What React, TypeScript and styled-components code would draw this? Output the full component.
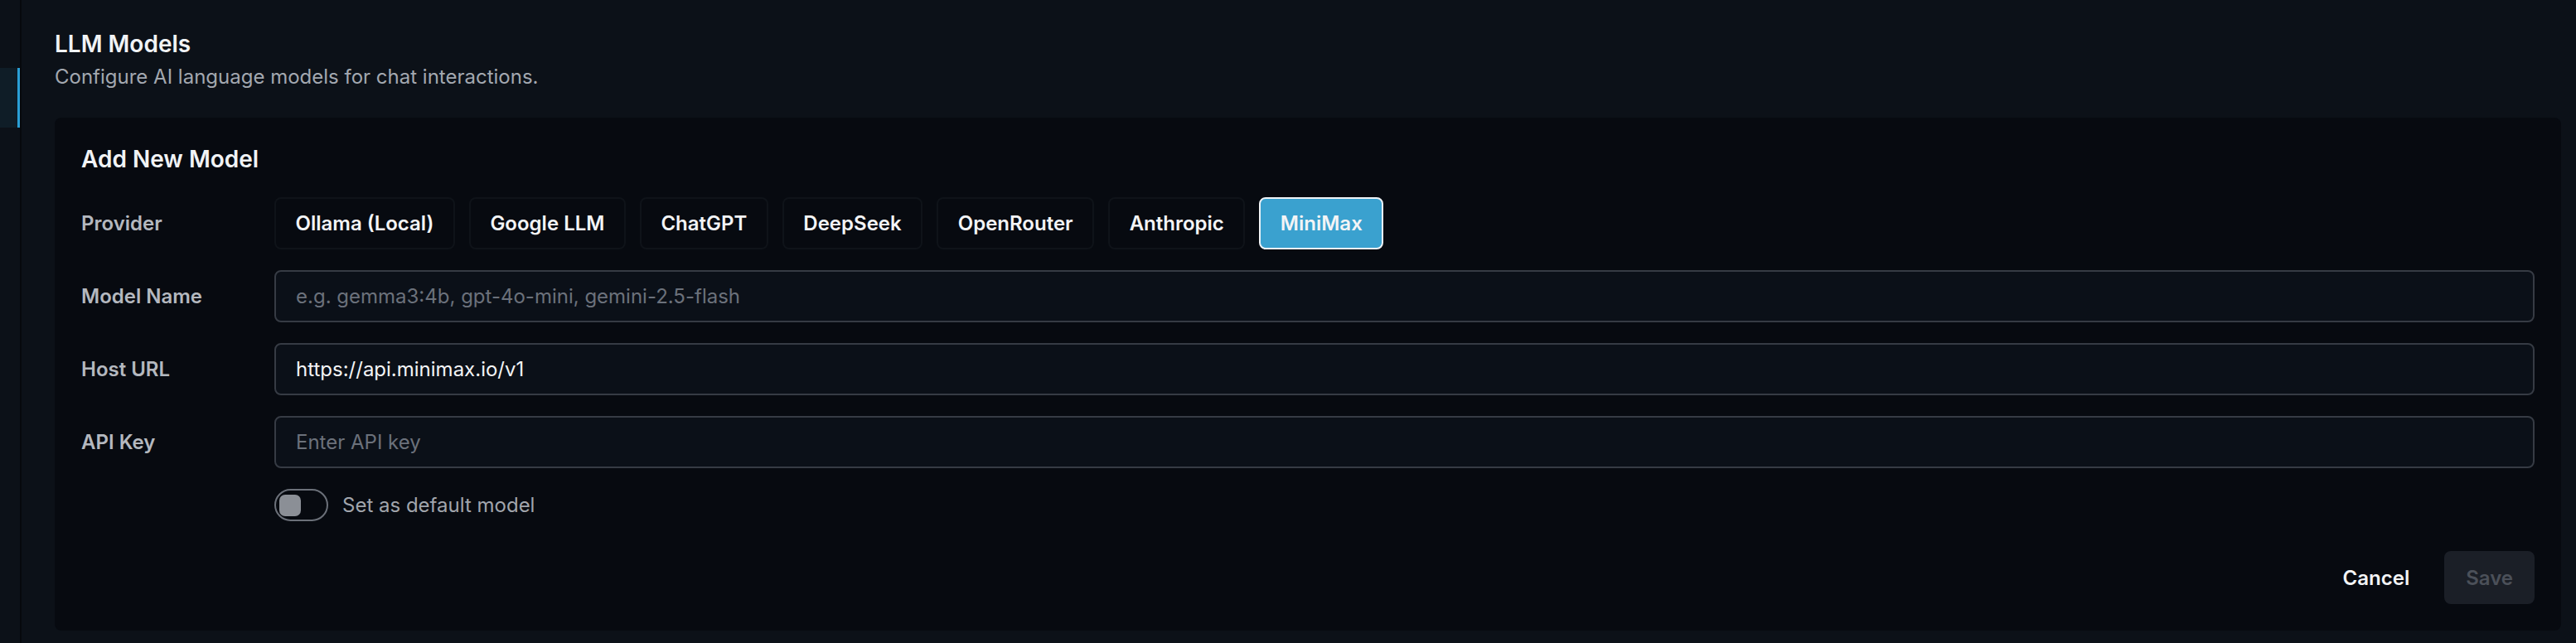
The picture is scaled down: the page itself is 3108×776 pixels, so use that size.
import React from "react";
import styled, { createGlobalStyle } from "styled-components";

const GlobalStyle = createGlobalStyle`
  * { box-sizing: border-box; }
  html, body { margin: 0; padding: 0; background: #0c1118; }
  body { font-family: Inter, "Noto Sans", "Liberation Sans", sans-serif; -webkit-font-smoothing: antialiased; }
  #root { min-height: 100vh; }
`;

const Shell = styled.div`
  display: flex;
  min-height: 776px;
  background: #0c1118;
`;

const Sidebar = styled.aside`
  width: 26px;
  flex: 0 0 26px;
  border-right: 2px solid #06090d;
  padding-top: 82px;
`;

const NavItem = styled.div<{ $active?: boolean }>`
  height: 72px;
  background: ${(p) => (p.$active ? "#0f1d27" : "transparent")};
  border-right: 3px solid ${(p) => (p.$active ? "#2a9fd6" : "transparent")};
`;

const Main = styled.main`
  flex: 1;
  min-width: 0;
  padding: 35px 18px 15px 40px;
`;

const PageTitle = styled.h1`
  margin: 0;
  font-size: 28px;
  line-height: 36px;
  font-weight: 600;
  color: #f1f3f5;
`;

const PageSubtitle = styled.p`
  margin: 6px 0 0;
  font-size: 24px;
  line-height: 32px;
  font-weight: 400;
  color: #a3a8b0;
`;

const Card = styled.section`
  margin-top: 33px;
  background: #070a10;
  border-radius: 8px;
  padding: 32px;
`;

const CardTitle = styled.h2`
  margin: 0 0 28px;
  font-size: 28px;
  line-height: 36px;
  font-weight: 600;
  color: #f1f3f5;
`;

const FormGrid = styled.div`
  display: grid;
  grid-template-columns: 233px 1fr;
  row-gap: 25px;
  align-items: center;
`;

const Label = styled.label`
  font-size: 24px;
  line-height: 32px;
  font-weight: 600;
  color: #b4b8bf;
`;

const ProviderRow = styled.div`
  display: flex;
  gap: 17px;
`;

const ProviderButton = styled.button<{ $active?: boolean }>`
  height: 63px;
  padding: 0 23.5px;
  border-radius: 8px;
  border: 2px solid ${(p) => (p.$active ? "#eef3f7" : "#0f1319")};
  background: ${(p) => (p.$active ? "#3aa1cf" : "transparent")};
  color: #f3f4f6;
  font-family: inherit;
  font-size: 24px;
  font-weight: 600;
  cursor: pointer;
`;

const Input = styled.input`
  width: 100%;
  height: 63px;
  padding: 0 24px;
  border: 2px solid #363b44;
  border-radius: 8px;
  background: #0b1018;
  color: #f3f4f6;
  font-family: inherit;
  font-size: 24px;
  outline: none;
  &::placeholder { color: #6b717b; }
`;

const ToggleRow = styled.div`
  grid-column: 2;
  display: flex;
  align-items: center;
  gap: 17px;
`;

const Switch = styled.button`
  width: 65px;
  height: 39px;
  padding: 0 4px;
  border: 2px solid #6b7079;
  border-radius: 999px;
  background: transparent;
  display: flex;
  align-items: center;
  cursor: pointer;
`;

const Knob = styled.span`
  width: 26px;
  height: 26px;
  border-radius: 7px;
  background: #8b8f96;
`;

const ToggleText = styled.span`
  font-size: 24px;
  line-height: 32px;
  color: #a1a5ac;
`;

const Footer = styled.div`
  margin-top: 36px;
  display: flex;
  justify-content: flex-end;
  gap: 18px;
`;

const GhostButton = styled.button`
  height: 64px;
  padding: 0 24px;
  border: none;
  background: transparent;
  color: #f3f4f6;
  font-family: inherit;
  font-size: 24px;
  font-weight: 600;
  cursor: pointer;
`;

const SaveButton = styled.button`
  height: 64px;
  padding: 0 26px;
  border: none;
  border-radius: 8px;
  background: #1b1f27;
  color: #4b5059;
  font-family: inherit;
  font-size: 24px;
  font-weight: 600;
`;

const providers = ["Ollama (Local)", "Google LLM", "ChatGPT", "DeepSeek", "OpenRouter", "Anthropic", "MiniMax"];

export default function App() {
  return (
    <>
      <GlobalStyle />
      <Shell>
        <Sidebar>
          <NavItem $active />
        </Sidebar>
        <Main>
          <PageTitle>LLM Models</PageTitle>
          <PageSubtitle>Configure AI language models for chat interactions.</PageSubtitle>
          <Card>
            <CardTitle>Add New Model</CardTitle>
            <FormGrid>
              <Label>Provider</Label>
              <ProviderRow>
                {providers.map((p) => (
                  <ProviderButton key={p} $active={p === "MiniMax"}>
                    {p}
                  </ProviderButton>
                ))}
              </ProviderRow>
              <Label>Model Name</Label>
              <Input placeholder="e.g. gemma3:4b, gpt-4o-mini, gemini-2.5-flash" />
              <Label>Host URL</Label>
              <Input defaultValue="https://api.minimax.io/v1" />
              <Label>API Key</Label>
              <Input placeholder="Enter API key" />
              <ToggleRow>
                <Switch aria-label="Set as default model">
                  <Knob />
                </Switch>
                <ToggleText>Set as default model</ToggleText>
              </ToggleRow>
            </FormGrid>
            <Footer>
              <GhostButton>Cancel</GhostButton>
              <SaveButton disabled>Save</SaveButton>
            </Footer>
          </Card>
        </Main>
      </Shell>
    </>
  );
}
